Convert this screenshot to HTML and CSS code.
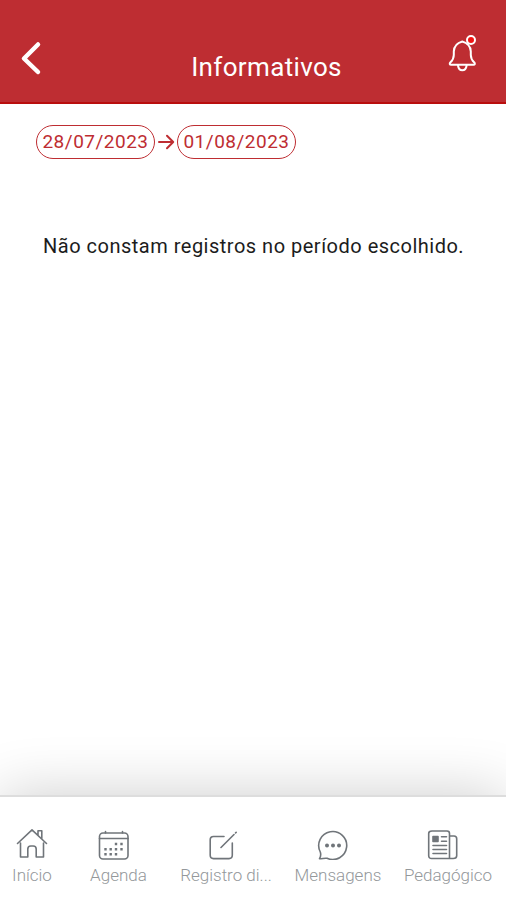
FILE: index.html
```html
<!DOCTYPE html>
<html lang="pt-BR">
<head>
    <meta charset="UTF-8">
    <meta name="viewport" content="width=device-width, initial-scale=1.0">
    <title>Informativos</title>
    <link rel="stylesheet" href="styles.css">
</head>
<body>

    <header class="topo">
        <a class="voltar" href="#" aria-label="Voltar">
            <svg width="24" height="36" viewBox="0 0 24 36"><path d="M19 4.5 5 18.500 19 32"/></svg>
        </a>
        <h1 class="titulo">Informativos</h1>
        <a class="sino" href="#" aria-label="Notificações">
            <svg width="32" height="40" viewBox="0 0 32 40">
                <path d="M15.300 7.500C10 9 7 12.500 6.800 17.500v3.500c0 3.500-1.300 5.500-3.500 7.500-1 1.200-.6 2.200.8 2.200h22.400c1.400 0 1.800-1 .8-2.200-2.200-2-3.500-4-3.500-7.500v-3.500C23.600 12.500 20.600 9 15.300 7.500z"/>
                <path d="M11 31.500c.4 3 2 4.800 4.300 4.800s3.900-1.800 4.300-4.800"/>
                <circle class="aviso" cx="24" cy="6" r="4"/>
            </svg>
        </a>
    </header>

    <main class="conteudo">
        <div class="periodo">
            <button class="data" type="button">28/07/2023</button>
            <svg class="seta" width="22" height="18" viewBox="0 0 22 18"><path d="M4 9h14M12 2.800 18.200 9 12 15.200"/></svg>
            <button class="data" type="button">01/08/2023</button>
        </div>
        <p class="vazio">Não constam registros no período escolhido.</p>
    </main>

    <nav class="menu">
        <a class="item inicio" href="#">
            <svg width="32" height="32" viewBox="0 0 32 32"><path d="M4.500 15v14h7.300v-8c0-2 1-3 3-3h2.400c2 0 3 1 3 3v8h7.300V15M1.500 15.500 16 1.800l14.500 13.700M22 7.300V2.700h3.800v8.200"/></svg>
            <span>Início</span>
        </a>
        <a class="item agenda" href="#">
            <svg width="32" height="32" viewBox="0 0 32 32">
                <rect x="1.500" y="5" width="28.500" height="26" rx="3.500"/>
                <path d="M1.500 10.500H30M7.500 3.500v1.500M24.500 3.500v1.500"/>
                <path class="pontos" d="M18 16h0M23.500 16h0M7.500 21.200h0M12.700 21.200h0M18 21.200h0M23.500 21.200h0M7.500 26.300h0M12.700 26.300h0M18 26.300h0"/>
            </svg>
            <span>Agenda</span>
        </a>
        <a class="item registro" href="#">
            <svg width="32" height="32" viewBox="0 0 32 32"><path d="M19 8.500H8.500c-2 0-3.300 1.300-3.300 3.300v15.500c0 2 1.300 3.300 3.300 3.300h15.500c2 0 3.300-1.300 3.300-3.300V15M16 19.500 29 6.500M30.600 4.900l.6-.6"/></svg>
            <span>Registro di...</span>
        </a>
        <a class="item mensagens" href="#">
            <svg width="32" height="32" viewBox="0 0 32 32">
                <path d="M2.500 30.700c1.300-2.200 1.600-4.300.8-6.700A14 14 0 1 1 10 30.300c-2.500-.3-4.500.4-7.500.4z"/>
                <path class="reticencias" d="M10 17.500h0M16 17.500h0M22 17.500h0"/>
            </svg>
            <span>Mensagens</span>
        </a>
        <a class="item pedagogico" href="#">
            <svg width="32" height="32" viewBox="0 0 32 32">
                <path d="M5 3h15c1.500 0 2.500 1 2.500 2.500v25H4.500c-1.700 0-2.800-1-2.800-2.800V5.500C1.700 4 3 3 5 3zM22.500 8H27c1.700 0 2.700 1 2.700 2.700v17c0 1.800-1.300 2.800-3.500 2.800H22"/>
                <path d="M14.500 8.700h5M14.500 13.300h5M6 17.500h13.500M6 21.500h13.500M6 25.500h13.500"/>
                <rect class="foto" x="6" y="8.500" width="5" height="5"/>
            </svg>
            <span>Pedagógico</span>
        </a>
    </nav>

</body>
</html>
```
FILE: styles.css
```css
* {
    box-sizing: border-box;
}
body {
    font-family: Roboto, "Liberation Sans", sans-serif;
    background-color: #fff;
    display: flex;
    flex-direction: column;
    height: 100vh;
    margin: 0;
    overflow: hidden;
}
a {
    color: inherit;
    text-decoration: none;
}
svg {
    display: block;
    fill: none;
    stroke: currentColor;
    stroke-linecap: round;
    stroke-linejoin: round;
}
.topo {
    display: flex;
    align-items: flex-start;
    justify-content: space-between;
    flex: none;
    height: 104px;
    padding: 34px 27px 0 19px;
    background-color: #be2d32;
    border-bottom: 2px solid #b90e0e;
    color: #fff;
}
.voltar {
    margin-top: 6px;
}
.voltar svg {
    stroke-width: 4.5;
}
.titulo {
    margin: 18px 0 0 43px;
    font-size: 26px;
    font-weight: 400;
    line-height: 31px;
    letter-spacing: 0.35px;
}
.sino svg {
    stroke-width: 2;
}
.aviso {
    fill: #f01414;
}
.conteudo {
    flex: 1;
    padding: 21px 36px 0;
}
.periodo {
    display: flex;
    align-items: center;
    color: #be2d32;
}
.data {
    width: 119px;
    height: 34px;
    padding: 0;
    border: 1px solid #be2d32;
    border-radius: 17px;
    background: none;
    color: inherit;
    font-family: inherit;
    font-size: 19px;
    line-height: 32px;
    letter-spacing: 0.5px;
}
.seta {
    stroke-width: 2;
}
.vazio {
    margin: 75px 0 0 7px;
    color: #1c1c1c;
    font-size: 20px;
    line-height: 24px;
    letter-spacing: 0.5px;
    white-space: nowrap;
}
.menu {
    display: grid;
    grid-template-columns: 64px 109px 106px 118px 102px;
    flex: none;
    height: 105px;
    padding-top: 31px;
    border-top: 2px solid #ddd;
    background-color: #fff;
    box-shadow: 0 0 60px rgba(0, 0, 0, 0.2);
}
.item {
    display: flex;
    flex-direction: column;
    align-items: center;
    color: #94989b;
    font-size: 17px;
    font-weight: 300;
    line-height: 22px;
    white-space: nowrap;
}
.item svg {
    margin-bottom: 4px;
    color: #70757a;
    stroke-width: 1.6;
}
.agenda svg,
.registro svg,
.mensagens svg,
.pedagogico svg {
    margin-right: 10px;
}
.pontos {
    stroke-linecap: square;
    stroke-width: 2.4;
}
.reticencias {
    stroke-width: 4;
}
.foto {
    fill: currentColor;
}
```
